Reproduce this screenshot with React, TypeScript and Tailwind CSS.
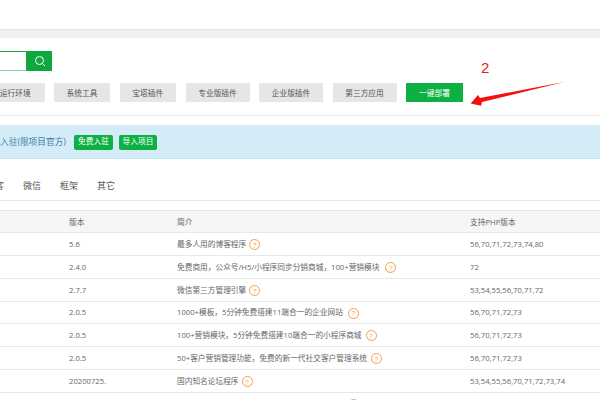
const F = "font-['Open_Sans','Noto_Sans_CJK_SC',sans-serif]";

function Help({ extra = "ml-[3px]" }: { extra?: string }) {
  return (
    <span className={`${extra} inline-flex items-center justify-center w-[11px] h-[11px] rounded-full border border-[#f7a13f] text-[#f7a13f] text-[8px] leading-none shrink-0`}>?</span>
  );
}

const rows = [
  ["5.6", "最多人用的博客程序", "56,70,71,72,73,74,80", "h-[23px]", "ml-[3px]"],
  ["2.4.0", "免费商用，公众号/H5/小程序同步分销商城，100+营销模块", "72", "h-[23px]", "ml-[6px]"],
  ["2.7.7", "微信第三方管理引擎", "53,54,55,56,70,71,72", "h-[22.5px]", "ml-[3px]"],
  ["2.0.5", "1000+模板，5分钟免费搭建11端合一的企业网站", "56,70,71,72,73", "h-[22.5px]", "ml-[5px]"],
  ["2.0.5", "100+营销模块，5分钟免费搭建10端合一的小程序商城", "56,70,71,72,73", "h-[23px]", "ml-[4px]"],
  ["2.0.5", "50+客户营销管理功能，免费的新一代社交客户管理系统", "56,70,71,72,73", "h-[23px]", "ml-[4px]"],
  ["20200725.", "国内知名论坛程序", "53,54,55,56,70,71,72,73,74", "h-[23px]", "ml-[3px]"],
] as const;

const cats = [
  ["运行环境", "w-[58.5px] -ml-[14px]"],
  ["系统工具", "w-[56px]"],
  ["宝塔插件", "w-[56.5px]"],
  ["专业版插件", "w-[64px]"],
  ["企业版插件", "w-[64px]"],
  ["第三方应用", "w-[64px]"],
] as const;

export default function App() {
  return (
    <div className={`${F} relative w-[600px] h-[400px] overflow-hidden bg-white text-[#666] text-[7.7px]`}>
      <div className="h-[29px]" />
      <div className="h-[9px] bg-[#f0f0f0] border-t border-[#e4e4e4]" />

      <div className="pt-[13px]">
        <div className="flex h-[20px] w-[52px]">
          <div className="flex-1 border-y border-r border-t-[#20a53a] border-b-[#8fd6a0] border-r-[#20a53a] bg-white" />
          <div className="w-[25px] bg-[#0fa83f] flex items-center justify-center">
            <svg width="12" height="12" viewBox="0 0 24 24" fill="none" stroke="white" strokeWidth="2">
              <circle cx="11" cy="11" r="8" />
              <path d="M17 17l5 5" />
            </svg>
          </div>
        </div>

        <div className="flex gap-[9.5px] mt-[12px] h-[19px] items-stretch">
          {cats.map(([t, w]) => (
            <div key={t} className={`${w} shrink-0 bg-[#e6e6e6] flex items-center justify-center text-[#555] whitespace-nowrap pt-[2px]`}>{t}</div>
          ))}
          <div className="w-[57px] shrink-0 bg-[#0db143] flex items-center justify-center text-white pt-[2px]">一键部署</div>
        </div>
      </div>

      <div className="mt-[13px] border-t border-[#e6e6e6] h-[10px]" />
      <div className="h-[34px] bg-[#d4ecf7] border-b border-[#c4e4ef] flex items-center text-[#3f7f9f] text-[8.7px] pt-[1px]">
        <span className="w-[74px] whitespace-nowrap pt-[1px]">入驻(限项目官方)</span>
        <span className="h-[15px] w-[39px] rounded-[2px] bg-[#0db143] text-white text-[7.7px] flex items-center justify-center">免费入驻</span>
        <span className="ml-[6px] h-[15px] w-[38px] rounded-[2px] bg-[#0db143] text-white text-[7.7px] flex items-center justify-center">导入项目</span>
      </div>

      <div className="h-[42px] border-b border-[#e8e8e8] flex items-center text-[9px] text-[#555] pt-[13px]">
        <span className="-ml-[14px] w-[37px] whitespace-nowrap">博客</span>
        <span className="w-[37px]">微信</span>
        <span className="w-[37px]">框架</span>
        <span>其它</span>
      </div>

      <div className="mt-[9px] border-t border-[#e4e4e4]">
        <div className="h-[22px] bg-[#f6f6f6] border-b border-[#e8e8e8] flex items-center pt-[2px]">
          <div className="w-[69px]" />
          <div className="w-[108px]">版本</div>
          <div className="w-[293px]">简介</div>
          <div>支持PHP版本</div>
        </div>
        {rows.map(([v, d, p, c, m], i) => (
          <div key={i} className={`${c} border-b border-[#e8e8e8] flex items-center pt-[2px]`}>
            <div className="w-[69px]" />
            <div className="w-[108px]">{v}</div>
            <div className="w-[293px] flex items-center whitespace-nowrap">{d}<Help extra={m} /></div>
            <div>{p}</div>
          </div>
        ))}
        <div className="h-[23px] flex items-center">
          <div className="w-[177px]" />
          <div className="w-[168px]" />
          <Help />
        </div>
      </div>

      <span className="absolute left-[481px] top-[58px] text-[15px] leading-[20px] text-[#f01818] font-['Liberation_Sans',sans-serif]">2</span>
      <svg className="absolute left-0 top-0" width="600" height="400" viewBox="0 0 600 400" fill="#f50f0f">
        <polygon points="470.7,103.5 478,95 480,98 564,82 482,102 481,105.7" />
      </svg>
    </div>
  );
}
